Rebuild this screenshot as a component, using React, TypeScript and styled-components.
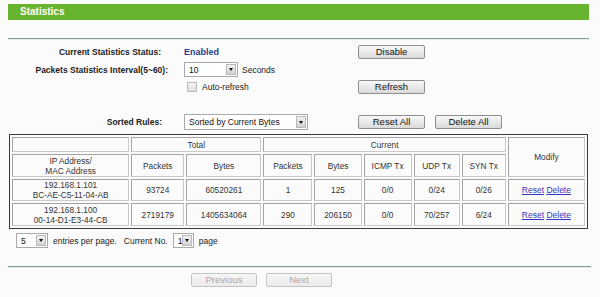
import React from "react";
import styled, { createGlobalStyle } from "styled-components";

const Global = createGlobalStyle`
  html, body { margin: 0; padding: 0; background: #fbfbfb; }
  body { font-family: "Liberation Sans", Arial, sans-serif; color: #222; font-size: 8.5px; }
`;

const Page = styled.div`
  width: 581px;
  padding: 4px 11px 0 8px;
`;

const TitleBar = styled.div`
  height: 16px;
  background: #69b42e;
  color: #fff;
  font-weight: bold;
  font-size: 10px;
  line-height: 16px;
  padding-left: 12px;
`;

const Divider = styled.div<{ $top: number; $extend?: number }>`
  margin-top: ${(p) => p.$top}px;
  margin-right: ${(p) => -(p.$extend ?? 0)}px;
  height: 0;
  border-top: 1px solid #7f9c9a;
  border-bottom: 1px solid #e3ebea;
`;

const FormRow = styled.div<{ $top: number; $h: number }>`
  display: grid;
  grid-template-columns: 176px 174px 1fr;
  align-items: center;
  height: ${(p) => p.$h}px;
  margin-top: ${(p) => p.$top}px;
`;

const Label = styled.div<{ $pr?: number }>`
  text-align: right;
  font-weight: bold;
  font-size: 8.5px;
  padding-right: ${(p) => p.$pr ?? 16}px;
  white-space: nowrap;
`;

const Value = styled.div`
  display: flex;
  align-items: center;
  gap: 4px;
  font-size: 8.5px;
  white-space: nowrap;
`;

const Status = styled.span`
  color: #1f418c;
  font-weight: bold;
  font-size: 9px;
`;

const Buttons = styled.div`
  display: flex;
  align-items: center;
  gap: 10px;
`;

const Button = styled.button<{ $w?: number }>`
  display: block;
  width: ${(p) => p.$w ?? 67}px;
  height: 14px;
  margin: 0;
  padding: 0;
  border: 1px solid #8e8e8e;
  border-radius: 2px;
  background: linear-gradient(#f8f8f8, #dadada);
  font-family: "Liberation Sans", Arial, sans-serif;
  font-size: 9.5px;
  line-height: 12px;
  color: #111;
  &:disabled {
    color: #a8a8a8;
    border-color: #c4c4c4;
    background: linear-gradient(#f6f6f6, #ebebeb);
  }
`;

const SelectBox = styled.div<{ $w: number; $h: number }>`
  width: ${(p) => p.$w}px;
  height: ${(p) => p.$h}px;
  box-sizing: border-box;
  border: 1px solid #a9a9a9;
  background: #fff;
  display: flex;
  align-items: center;
  justify-content: space-between;
  font-size: 8.5px;
  color: #111;
  padding-left: 4px;
  padding-right: 1px;
  flex: none;
`;

const Arrow = styled.span`
  width: 10px;
  height: calc(100% - 2px);
  box-sizing: border-box;
  border: 1px solid #b9b9b9;
  background: linear-gradient(#f1f1f1, #d2d2d2);
  display: flex;
  align-items: center;
  justify-content: center;
  &::after {
    content: "";
    border-left: 2.5px solid transparent;
    border-right: 2.5px solid transparent;
    border-top: 3px solid #111;
  }
`;

const Select = ({ w, h, value }: { w: number; h: number; value: string }) => (
  <SelectBox $w={w} $h={h}>
    <span>{value}</span>
    <Arrow />
  </SelectBox>
);

const Check = styled.span`
  width: 10px;
  height: 10px;
  box-sizing: border-box;
  border: 1px solid #b8b8b8;
  background: linear-gradient(#f2f2f2, #e2e2e2);
  margin-left: 3px;
  margin-right: 1px;
`;

const Table = styled.table`
  margin-top: 4px;
  margin-left: 1px;
  width: 579px;
  table-layout: fixed;
  border-collapse: separate;
  border-spacing: 2px;
  border: 1px solid #3a3a3a;
  background: #fbfbfb;
  font-size: 8.3px;
  color: #333;
`;

const Cell = styled.td<{ $h?: number }>`
  border: 1px solid #a3a3a3;
  border-right-color: #c9c9c9;
  border-bottom-color: #c9c9c9;
  text-align: center;
  vertical-align: middle;
  padding: 0;
  line-height: 10px;
  height: ${(p) => (p.$h ? p.$h - 2 : 0)}px;
  white-space: nowrap;
`;

const Link = styled.a`
  color: #3434c0;
  text-decoration: underline;
  font-size: 8.5px;
  cursor: pointer;
`;

const Pager = styled.div`
  display: flex;
  align-items: center;
  gap: 5px;
  height: 15px;
  margin-top: 4px;
  margin-left: 8px;
  font-size: 8.5px;
`;

const PagerText = styled.span<{ $ml?: number }>`
  margin-left: ${(p) => p.$ml ?? 0}px;
  white-space: nowrap;
`;

const NavRow = styled.div`
  display: flex;
  gap: 9px;
  margin-top: 5px;
  padding-left: 183px;
`;

const cols = [117, 53, 75, 49, 47, 48, 46, 44, 77];

const rows = [
  ["192.168.1.101", "BC-AE-C5-11-04-AB", "93724", "60520261", "1", "125", "0/0", "0/24", "0/26"],
  ["192.168.1.100", "00-14-D1-E3-44-CB", "2719179", "1405634064", "290", "206150", "0/0", "70/257", "6/24"],
];

export default function App() {
  return (
    <Page>
      <Global />
      <TitleBar>Statistics</TitleBar>
      <Divider $top={18} />

      <FormRow $top={5} $h={14}>
        <Label $pr={23}>Current Statistics Status:</Label>
        <Value>
          <Status>Enabled</Status>
        </Value>
        <Buttons>
          <Button>Disable</Button>
        </Buttons>
      </FormRow>

      <FormRow $top={3} $h={15}>
        <Label>Packets Statistics Interval(5~60):</Label>
        <Value>
          <Select w={54} h={15} value="10" />
          <span>Seconds</span>
        </Value>
        <div />
      </FormRow>

      <FormRow $top={3} $h={14}>
        <div />
        <Value>
          <Check />
          <span>Auto-refresh</span>
        </Value>
        <Buttons>
          <Button>Refresh</Button>
        </Buttons>
      </FormRow>

      <FormRow $top={20} $h={16}>
        <Label $pr={22}>Sorted Rules:</Label>
        <Value>
          <Select w={124} h={16} value="Sorted by Current Bytes" />
        </Value>
        <Buttons>
          <Button>Reset All</Button>
          <Button>Delete All</Button>
        </Buttons>
      </FormRow>

      <Table>
        <colgroup>
          {cols.map((w, i) => (
            <col key={i} style={{ width: w }} />
          ))}
        </colgroup>
        <tbody>
          <tr>
            <Cell $h={15}></Cell>
            <Cell colSpan={2}>Total</Cell>
            <Cell colSpan={5}>Current</Cell>
            <Cell rowSpan={2}>Modify</Cell>
          </tr>
          <tr>
            <Cell $h={23}>
              IP Address/
              <br />
              MAC Address
            </Cell>
            <Cell>Packets</Cell>
            <Cell>Bytes</Cell>
            <Cell>Packets</Cell>
            <Cell>Bytes</Cell>
            <Cell>ICMP Tx</Cell>
            <Cell>UDP Tx</Cell>
            <Cell>SYN Tx</Cell>
          </tr>
          {rows.map((r, i) => (
            <tr key={i}>
              <Cell $h={i === 0 ? 22 : 23}>
                {r[0]}
                <br />
                {r[1]}
              </Cell>
              {r.slice(2).map((v, j) => (
                <Cell key={j}>{v}</Cell>
              ))}
              <Cell>
                <Link>Reset</Link> <Link>Delete</Link>
              </Cell>
            </tr>
          ))}
        </tbody>
      </Table>

      <Pager>
        <Select w={32} h={15} value="5" />
        <PagerText>entries per page.</PagerText>
        <PagerText $ml={2}>Current No.</PagerText>
        <Select w={21} h={15} value="1" />
        <PagerText>page</PagerText>
      </Pager>

      <Divider $top={18} $extend={2} />

      <NavRow>
        <Button $w={66} disabled>
          Previous
        </Button>
        <Button $w={66} disabled>
          Next
        </Button>
      </NavRow>
    </Page>
  );
}
